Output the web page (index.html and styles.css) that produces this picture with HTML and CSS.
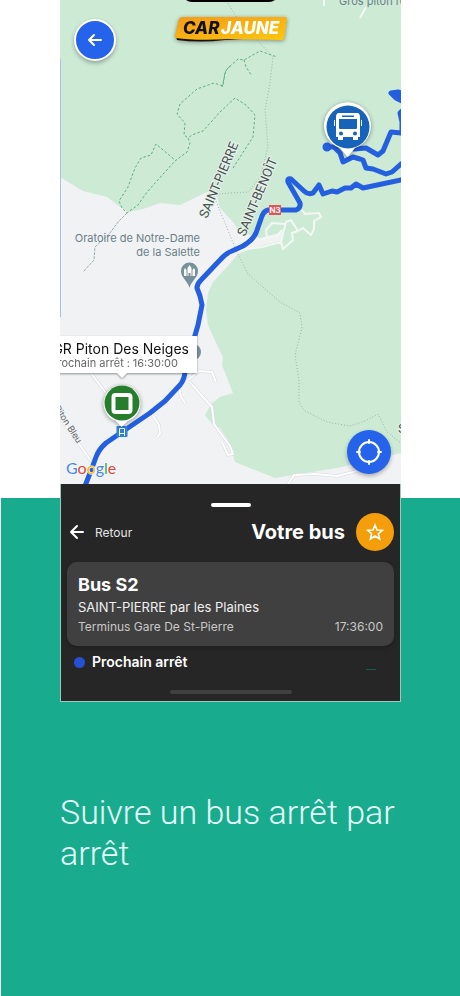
FILE: index.html
```html
<!DOCTYPE html>
<html lang="fr">
<head>
    <meta charset="utf-8">
    <meta name="viewport" content="width=device-width, initial-scale=1">
    <title>Car Jaune</title>
    <link rel="stylesheet" href="styles.css">
</head>
<body>
    <main class="promo">
        <div class="phone">
            <div class="map">
                <svg class="map-canvas" viewBox="60 0 341 484" role="img" aria-label="Carte">
                    <!-- land -->
                    <rect x="60" y="0" width="341" height="484" fill="#cdead5"/>
                    <path fill="#f0f2f4" d="M60 177 L83 191 L107 197 L119 206 L128 212 L143 209 L160 203 L180 205 L207 192 L216 194 L220 208 L233 222 L240 232 L260 238 L283 232 L283 240 L253 248 L238 254 L228 266 L213 282 L208 293 L206 310 L208 325 L217 345 L223 357 L222 365 L233 393 L220 397 L212 403 L205 415 L212 424 L220 428 L228 440 L235 462 L275 478 L337 468 L401 453 L401 484 L60 484 Z"/>

                    <!-- small roads -->
                    <g fill="none" stroke="#d5d9dd" stroke-width="3">
                        <path d="M90 372 L106 393 M60 417 L91 461"/>
                        <path d="M188 380 L199 371 L212 372 L216 382 M190 382 L194 387 L212 407 L214 424 L230 446 L233 454 L228 455 L222 442 M179 387 L181 397 L185 403 M151 413 L159 425 L160 434 L157 437"/>
                        <path d="M288 484 L294 475 L315 474 L337 476 L357 471"/>
                    </g>
                    <g fill="none" stroke="#fff" stroke-width="2">
                        <path d="M90 372 L106 393 M60 417 L91 461"/>
                        <path d="M188 380 L199 371 L212 372 L216 382 M190 382 L194 387 L212 407 L214 424 L230 446 L233 454 L228 455 L222 442 M179 387 L181 397 L185 403 M151 413 L159 425 L160 434 L157 437"/>
                        <path d="M288 484 L294 475 L315 474 L337 476 L357 471"/>
                        <path stroke="#f3f8f4" d="M240 250 L262 247 L281 242 L286 222 L291 220 L298 231 L303 228 L311 235 L314 229 L314 221 L321 217 L319 213 L305 214 L302 210 M244 241 L262 239 L277 236 L282 230 M281 242 L283 249 L293 240 L292 233 L298 231 M267 238 L266 230 L272 223 L285 224"/>
                        <path stroke="#f3f8f4" d="M324 0 L324 6 M366 7 L360 18"/>
                    </g>

                    <!-- footpaths -->
                    <g fill="none" stroke="#5fae7d" stroke-width="1" stroke-dasharray="2.5 2">
                        <path d="M222 87 L226 70 L238 59 L244 60 L260 51 L277 57 M244 60 L246 67 L252 76"/>
                        <path d="M230 66 L225 72 L223 86 L214 83 L197 89 L180 104 L177 114 L185 123 L184 135 L188 138"/>
                        <path d="M233 168 L253 137 L255 115 L246 105 L235 98 L220 112 L203 131 L192 135 L188 138 L190 143 L187 152 L175 161 L147 192 L138 205 L127 213 L122 208 L119 201 L128 187 L135 168 L141 158 L151 155 L156 144 L175 160"/>
                    </g>
                    <g fill="none" stroke="#9cb5a7" stroke-width="1" stroke-dasharray="1 2">
                        <path d="M228 3 L238 20 L257 40 L273 57 L270 83 L265 110 L268 147 L260 178 L248 192 L230 193 L220 194 L214 196 L220 211 L236 250 L248 274 L280 302 L300 313 L302 328 L295 355 L299 380 L299 403 L305 411 L327 422 L350 426 L365 421 L378 414 L387 432 L401 443"/>
                        <path stroke-dasharray="3 1" d="M127 213 L118 222 L110 233 L95 247 L94 260 L83 272"/>
                    </g>

                    <!-- place names -->
                    <g class="map-place">
                        <text x="339" y="5">Gros piton rond</text>
                        <text x="200" y="242" text-anchor="end">Oratoire de Notre-Dame</text>
                        <text x="200" y="256" text-anchor="end">de la Salette</text>
                    </g>
                    <g class="map-town">
                        <text transform="translate(207 219) rotate(-67)">SAINT-PIERRE</text>
                        <text transform="translate(245 237) rotate(-67)">SAINT-BENOÎT</text>
                        <text x="398" y="433">S</text>
                    </g>
                    <text class="map-road" transform="translate(54 408) rotate(57)">Piton Bleu</text>

                    <path fill="#78909c" d="M189.500 288 C188 281 181 278 181 271 A8.500 8.500 0 0 1 198 271 C198 278 191 281 189.500 288 Z"/>
                    <path fill="#fff" d="M184 276 V270 L185 268 L186.500 270 V276 Z M187.500 276 V268 L189.500 265 L191.500 268 V276 H190.500 V273 H188.500 V276 Z M192.500 276 V270 L194 268 L195 270 V276 Z"/>
                    <circle cx="193" cy="352" r="8" fill="#78909c"/>

                    <!-- bus line -->
                    <g class="route">
                        <path d="M85 486 L92 468 L96 457 Q99 449 106 443 L122 432 L150 413 L165 401 L180 385 Q185 379 185 370 L198 325 L202 305 L200 296 L197 288 Q197 284 201 280 L220 260 Q226 253 232 251 L243 246 Q253 240 256 233 L262 216 Q264 211 268 210 H296 Q301 208 300 203 L288 182 Q287 178 291 179 L304 191 Q308 195 313 193 L319 185 L323 194 L332 191 L337 192 L345 188 L351 188 L356 184 L363 188 L401 180"/>
                        <path d="M327 147 L334 147 L340 153 L343 162 L353 157 L360 159 L363 160 L366 168 L373 169 L386 174 L392 172 L401 164"/>
                        <path d="M354 149 L366 148 L378 155 L383 151 L391 132 L401 133 M402 111 L400 113 L402 122 V133"/>
                        <path fill="#235fdf" d="M402 101 L396 98 L391 93 L398 92 L402 93"/>
                        <circle cx="327" cy="147" r="2"/>
                    </g>
                    <rect x="269" y="205" width="12" height="10" fill="#e15759"/>
                    <text class="road-number" x="275" y="213" text-anchor="middle">N3</text>

                    <!-- bus marker -->
                    <g class="marker">
                        <path fill="#fff" d="M347.500 157 L340 148 A23.500 23.500 0 1 1 355 148 Z"/>
                        <circle cx="348" cy="127" r="21.500" fill="#1763b9"/>
                        <path fill="#fff" fill-rule="evenodd" d="M339 113 H357 Q360 113 360 117 V137 H358 V140 H353 V137 H343 V140 H338 V137 H336 V117 Q336 113 339 113 Z M342 115.500 V117 H354 V115.500 Z M339 119 V128 Q339 129 340 129 H356 Q357 129 357 128 V119 Z M341 131.500 A2 2 0 1 0 341 135.500 A2 2 0 1 0 341 131.500 Z M355 131.500 A2 2 0 1 0 355 135.500 A2 2 0 1 0 355 131.500 Z"/>
                        <path stroke="#fff" stroke-width="1" d="M334.500 120 V126 M361.500 120 V126"/>
                    </g>

                    <!-- stop marker -->
                    <rect x="116.500" y="426" width="11" height="11" rx="1" fill="#2b83d8"/>
                    <path fill="none" stroke="#fff" stroke-width="1" d="M119.500 436 V428.500 H124.500 V436 M119.500 433.500 H124.500"/>
                    <g class="marker">
                        <path fill="#fff" d="M121.500 427 L116 421 A18.500 18.500 0 1 1 128 421 Z"/>
                        <circle cx="122" cy="403" r="17.500" fill="#267d2b"/>
                        <rect x="113.500" y="395" width="17" height="17" rx="2" fill="none" stroke="#fff" stroke-width="4"/>
                    </g>

                    <!-- stop callout -->
                    <g class="callout">
                        <path fill="#fff" d="M50 336 H197 V373 H127 L122 378 L117 373 H50 Z"/>
                        <text class="callout-title" x="189" y="354" text-anchor="end">GR Piton Des Neiges</text>
                        <text class="callout-time" x="130" y="367" text-anchor="end">Prochain arrêt :</text>
                        <text class="callout-time" x="178" y="367" text-anchor="end">16:30:00</text>
                    </g>

                    <text class="google" x="66" y="474"><tspan fill="#4285f4">G</tspan><tspan fill="#ea4335">o</tspan><tspan fill="#fbbc05">o</tspan><tspan fill="#4285f4">g</tspan><tspan fill="#34a853">l</tspan><tspan fill="#ea4335">e</tspan></text>

                    <!-- camera notch -->
                    <rect x="182" y="-20" width="97" height="22" rx="10" fill="#000"/>
                    <path d="M60 59 V317" stroke="#a9c2e2" stroke-width="2"/>

                    <!-- logo -->
                    <defs>
                        <linearGradient id="logo-fill" x1="0" y1="0" x2="1" y2="1">
                            <stop offset="0" stop-color="#f59a17"/>
                            <stop offset="1" stop-color="#fdc70b"/>
                        </linearGradient>
                    </defs>
                    <g class="marker">
                        <path fill="#111" d="M176 36 L177 40 Q200 43 225 40 L260 38 Z"/>
                        <path fill="url(#logo-fill)" d="M179 19 Q180 17 183 17 H285 Q287 17 287 19 L284 38 Q284 40 281 40 L230 39 Q196 41 176 38 Q175 38 175 36 Z"/>
                        <text class="logo-text" x="183" y="34">CAR<tspan fill="#fff" x="221">JAUNE</tspan></text>
                    </g>
                </svg>

                <button class="map-button back-button" aria-label="Retour à la carte">
                    <svg width="20" height="20" viewBox="0 0 20 20"><path d="M16 10 H4 M9 5 L4 10 L9 15"/></svg>
                </button>
                <button class="map-button locate-button" aria-label="Me localiser">
                    <svg width="28" height="28" viewBox="0 0 28 28"><circle cx="14" cy="14" r="10"/><path d="M14 2 V5 M14 23 V26 M2 14 H5 M23 14 H26"/></svg>
                </button>
            </div>

            <section class="sheet">
                <div class="sheet-handle"></div>
                <div class="sheet-header">
                    <button class="return-button">
                        <svg width="16" height="16" viewBox="0 0 16 16"><path d="M14 8 H2 M8 2 L2 8 L8 14"/></svg>
                        Retour
                    </button>
                    <h2 class="sheet-title">Votre bus</h2>
                    <button class="favorite-button" aria-label="Ajouter aux favoris">
                        <svg width="18" height="18" viewBox="0 0 18 18"><path d="M9 2 L11 7 L16.500 7.300 L12.300 10.700 L13.700 16 L9 13 L4.300 16 L5.700 10.700 L1.500 7.300 L7 7 Z"/></svg>
                    </button>
                </div>
                <div class="bus-card">
                    <h3 class="bus-name">Bus S2</h3>
                    <p class="bus-direction">SAINT-PIERRE par les Plaines</p>
                    <p class="bus-terminus"><span>Terminus Gare De St-Pierre</span><time>17:36:00</time></p>
                </div>
                <div class="next-stop">
                    <span class="next-dot"></span>
                    <strong>Prochain arrêt</strong>
                    <span class="next-line"></span>
                </div>
                <div class="home-bar"></div>
            </section>
        </div>

        <h1 class="promo-title">Suivre un bus arrêt par arrêt</h1>
    </main>
</body>
</html>
```
FILE: styles.css
```css
* {
    box-sizing: border-box;
}

body {
    margin: 0;
    font-family: Inter, "Liberation Sans", sans-serif;
    background: #fff;
}

h1, h2, h3, p {
    margin: 0;
    font-weight: 400;
}

button {
    border: none;
    padding: 0;
    font-family: inherit;
    cursor: pointer;
}

.promo {
    min-height: 100vh;
    padding: 0 59px;
    border-left: 1px solid #fff;
    background: linear-gradient(#fff 498px, #19ab8d 498px);
}

.map {
    position: relative;
}

.map-canvas {
    display: block;
    width: 100%;
    height: auto;
}

.map-place {
    font-size: 11px;
    fill: #6b7f88;
}

.map-town {
    font-family: Roboto, sans-serif;
    font-size: 13px;
    fill: #4a4f52;
    stroke: #e8f4ec;
    stroke-width: 2px;
    paint-order: stroke;
}

.map-road {
    font-size: 9px;
    fill: #666;
}

.road-number {
    font-size: 8px;
    font-weight: 600;
    fill: #fff;
}

.route {
    fill: none;
    stroke: #235fdf;
    stroke-width: 5;
    stroke-linecap: round;
    stroke-linejoin: round;
}

.marker {
    filter: drop-shadow(0 1px 2px rgba(0, 0, 0, 0.4));
}

.callout {
    filter: drop-shadow(0 1px 1px rgba(0, 0, 0, 0.4));
}

.callout-title {
    font-size: 14px;
    fill: #111;
}

.callout-time {
    font-size: 11px;
    fill: #666;
}

.google {
    font-family: Lato, sans-serif;
    font-size: 16px;
    stroke: #fff;
    stroke-width: 1px;
    paint-order: stroke;
}

.logo-text {
    font-size: 17px;
    font-weight: 800;
    font-style: italic;
    fill: #111;
}

.map-button {
    position: absolute;
    display: grid;
    place-items: center;
    border-radius: 50%;
    background: #2563eb;
    box-shadow: 0 2px 4px rgba(0, 0, 0, 0.3);
}

button svg {
    fill: none;
    stroke: #fff;
    stroke-width: 2;
    stroke-linecap: round;
    stroke-linejoin: round;
}

.back-button {
    top: 19px;
    left: 14px;
    width: 42px;
    height: 42px;
    border: 2px solid #fff;
}

.locate-button {
    right: 10px;
    bottom: 10px;
    width: 44px;
    height: 44px;
}

.sheet {
    padding: 19px 6px 7px;
    background: #262626;
    border: 1px solid #9fc8bd;
    border-top: none;
    color: #fff;
}

.sheet-handle {
    width: 40px;
    height: 4px;
    margin: 0 auto;
    border-radius: 2px;
    background: #fff;
}

.sheet-header {
    display: flex;
    align-items: center;
    gap: 11px;
    margin-top: 6px;
}

.return-button {
    display: flex;
    align-items: center;
    gap: 10px;
    margin-right: auto;
    padding-left: 2px;
    background: none;
    color: #e5e5e5;
    font-size: 12px;
}

.sheet-title {
    font-size: 20px;
    font-weight: 700;
}

.favorite-button {
    display: grid;
    place-items: center;
    width: 38px;
    height: 38px;
    border-radius: 50%;
    background: #f59e0b;
}

.favorite-button svg {
    stroke-width: 1.5;
    stroke-linejoin: miter;
}

.bus-card {
    margin-top: 11px;
    padding: 12px 11px 10px;
    border-radius: 10px;
    background: #404040;
    box-shadow: 0 2px 4px rgba(0, 0, 0, 0.2);
}

.bus-name {
    font-size: 18px;
    line-height: 22px;
    font-weight: 700;
}

.bus-direction {
    font-size: 13px;
    line-height: 22px;
    color: #f0f0f0;
}

.bus-terminus {
    display: flex;
    justify-content: space-between;
    font-size: 12px;
    line-height: 18px;
    color: #c8c8c8;
}

.next-stop {
    display: flex;
    align-items: center;
    gap: 7px;
    margin-top: 6px;
    padding: 0 18px 0 7px;
    font-size: 14px;
    line-height: 20px;
}

.next-stop strong {
    font-weight: 600;
}

.next-dot {
    width: 11px;
    height: 11px;
    border-radius: 50%;
    background: #2450d3;
}

.next-line {
    align-self: flex-end;
    width: 10px;
    height: 1px;
    margin: 0 0 2px auto;
    background: #17594c;
}

.home-bar {
    width: 122px;
    height: 4px;
    margin: 18px auto 0;
    border-radius: 2px;
    background: #404040;
}

.promo-title {
    margin-top: 90px;
    font-family: Roboto, "Liberation Sans", sans-serif;
    font-size: 34px;
    line-height: 41px;
    font-weight: 300;
    color: #e6fffb;
}
```
